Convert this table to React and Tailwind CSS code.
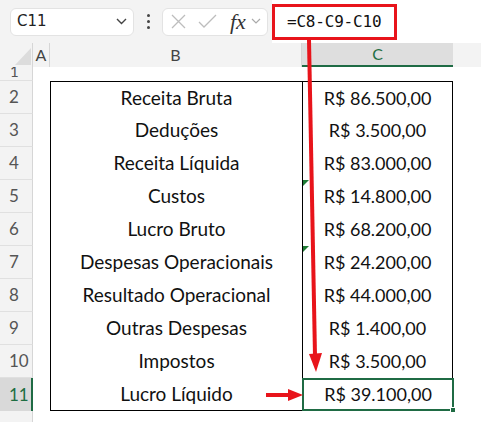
import React from "react";

const rows = [
  ["Receita Bruta", "R$ 86.500,00"],
  ["Deduções", "R$ 3.500,00"],
  ["Receita Líquida", "R$ 83.000,00"],
  ["Custos", "R$ 14.800,00"],
  ["Lucro Bruto", "R$ 68.200,00"],
  ["Despesas Operacionais", "R$ 24.200,00"],
  ["Resultado Operacional", "R$ 44.000,00"],
  ["Outras Despesas", "R$ 1.400,00"],
  ["Impostos", "R$ 3.500,00"],
  ["Lucro Líquido", "R$ 39.100,00"],
];

const cellFont = { fontFamily: "Lato, 'Open Sans', sans-serif" };

export default function App() {
  return (
    <div className="relative w-[481px] h-[422px] overflow-hidden bg-white" style={{ fontFamily: "'Noto Sans', sans-serif" }}>
      {/* top bar */}
      <div className="h-[43px] bg-[#f3f3f3] flex items-center pl-[10px]">
        <div className="w-[124px] h-[28px] bg-white border border-[#e3e3e3] rounded-md flex items-center justify-between pl-[6px] pr-[6px]">
          <span className="text-[15px] text-[#222]" style={{ fontFamily: "'DejaVu Sans', sans-serif" }}>C11</span>
          <svg width="11" height="7" viewBox="0 0 11 7"><path d="M1 1l4.5 4.5L10 1" fill="none" stroke="#444" strokeWidth="1.4" /></svg>
        </div>
        <div className="w-[28px] flex flex-col items-center gap-[3px]">
          <span className="w-[3px] h-[3px] rounded-full bg-[#444]" />
          <span className="w-[3px] h-[3px] rounded-full bg-[#444]" />
          <span className="w-[3px] h-[3px] rounded-full bg-[#444]" />
        </div>
        <div className="w-[106px] h-[28px] bg-white border border-[#e3e3e3] rounded-md flex items-center pl-[6px]">
          <svg width="17" height="17" viewBox="0 0 17 17" className="ml-[1px]"><path d="M2 2l13 13M15 2L2 15" stroke="#bdbdbd" strokeWidth="1.3" fill="none" /></svg>
          <svg width="19" height="15" viewBox="0 0 19 15" className="ml-[11px]"><path d="M1 8l5 5L18 1" stroke="#bdbdbd" strokeWidth="1.3" fill="none" /></svg>
          <span className="ml-[13px] text-[22px] italic text-[#333] leading-none" style={{ fontFamily: "'Liberation Serif', serif" }}>fx</span>
          <svg width="10" height="7" viewBox="0 0 10 7" className="ml-[5px]"><path d="M1 1l4 4 4-4" fill="none" stroke="#aaa" strokeWidth="1.2" /></svg>
        </div>
        <div className="flex-1 h-[43px] bg-white ml-[4px] flex items-center">
          <div className="w-[125px] h-[36px] border-[3px] border-[#e8141b] flex items-center pl-[12px]">
            <span className="text-[16px] text-[#111]" style={{ fontFamily: "'DejaVu Sans Mono', monospace", letterSpacing: "-0.2px" }}>=C8-C9-C10</span>
          </div>
        </div>
      </div>

      {/* column header */}
      <div className="flex h-[24px] bg-[#f3f3f3] text-[16px] text-[#444]" style={cellFont}>
        <div className="w-[33px] border-r border-[#d6d6d6] relative">
          <svg width="16" height="17" viewBox="0 0 16 17" className="absolute left-[15px] top-[5px]"><path d="M16 0L16 17L0 17Z" fill="#dcdcdc" /></svg>
        </div>
        <div className="w-[17px] flex items-center justify-center border-r border-[#d6d6d6]">A</div>
        <div className="w-[252px] flex items-center justify-center border-r border-[#d6d6d6]">B</div>
        <div className="w-[151px] flex items-center justify-center bg-[#dedede] text-[#1e6e42] border-b-2 border-[#1f6b44]">C</div>
        <div className="flex-1" />
      </div>

      {/* row 1 */}
      <div className="flex h-[14px]">
        <div className="w-[33px] bg-[#f3f3f3] border-r border-[#d6d6d6] border-b border-b-[#e0e0e0] overflow-hidden relative">
          <span className="absolute left-[10px] top-[-6px] text-[15px] leading-[20px] text-[#555]" style={cellFont}>1</span>
        </div>
        <div className="flex-1" />
      </div>

      {rows.map(([label, value], i) => {
        const n = i + 2;
        const last = i === rows.length - 1;
        const first = i === 0;
        return (
          <div key={n} className="flex h-[33px]">
            <div
              className={
                last
                  ? "w-[33px] bg-[#d9d9d9] border-r-2 border-[#1f6b44] flex items-center pl-[9px] text-[17px] text-[#1e6e42]"
                  : "w-[33px] bg-[#f3f3f3] border-r border-[#d6d6d6] border-b border-b-[#e0e0e0] flex items-center pl-[9px] text-[17px] text-[#555]"
              }
              style={cellFont}
            >
              {n}
            </div>
            <div className="w-[17px]" />
            <div
              className={
                "w-[252px] border-l border-black flex items-center justify-center text-[19px] text-[#111] " +
                (first ? "border-t " : "") +
                (last ? "border-b " : "")
              }
              style={cellFont}
            >
              {label}
            </div>
            {last ? (
              <div className="w-[152px] border-2 border-[#1f6b44] flex items-center justify-center text-[18px] text-[#111] relative" style={cellFont}>
                {value}
                <span className="absolute right-[-4px] bottom-[-4px] w-[6px] h-[6px] bg-[#1f6b44] border border-white" />
              </div>
            ) : (
              <div
                className={"w-[151px] border-l border-r border-black flex items-center justify-center text-[18px] text-[#111] relative " + (first ? "border-t" : "")}
                style={cellFont}
              >
                {(n === 5 || n === 7) && (
                  <svg width="6" height="6" viewBox="0 0 6 6" className="absolute left-0 top-0"><path d="M0 0H6L0 6Z" fill="#1e7b34" /></svg>
                )}
                {value}
              </div>
            )}
            <div className="flex-1" />
          </div>
        );
      })}

      {/* row 12 */}
      <div className="flex h-[20px]">
        <div className="w-[33px] bg-[#f3f3f3] border-r border-[#d6d6d6]" />
        <div className="flex-1" />
      </div>

      {/* arrows */}
      <svg className="absolute left-0 top-0 pointer-events-none" width="481" height="422" viewBox="0 0 481 422">
        <path d="M309 40 L315 356" stroke="#e8141b" strokeWidth="4" fill="none" />
        <path d="M309 354 L322 353 L316 372 Z" fill="#e8141b" />
        <path d="M266 395 L290 395" stroke="#e8141b" strokeWidth="4" fill="none" />
        <path d="M288 389 L303 395 L288 401 Z" fill="#e8141b" />
      </svg>
    </div>
  );
}
